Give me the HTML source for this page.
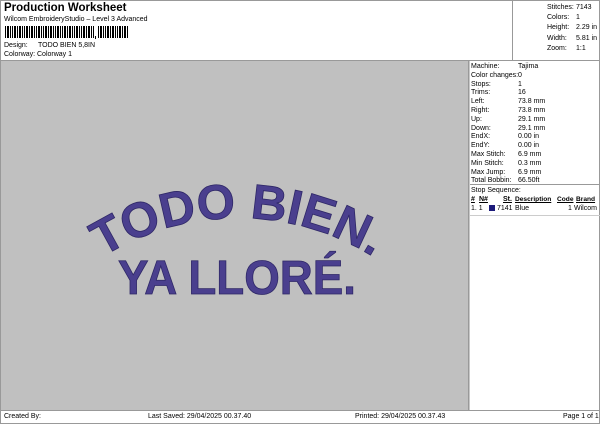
<!DOCTYPE html>
<html><head><style>
*{margin:0;padding:0;box-sizing:border-box}
body{width:600px;height:424px;background:#fff;font-family:"Liberation Sans",Arial,sans-serif;font-size:7px;color:#000;position:relative;overflow:hidden}
.a{position:absolute;white-space:nowrap}
</style></head><body>
<div class="a" style="left:0;top:0;width:600px;height:424px;border:1px solid #999"></div>
<div class="a" style="left:4px;top:2px;font-size:11.5px;font-weight:bold">Production Worksheet</div>
<div class="a" style="left:4px;top:16px">Wilcom EmbroideryStudio – Level 3 Advanced</div>
<svg class="a" style="left:5px;top:26px" width="150" height="13">
<g fill="#000">
<rect x="0" y="0" width="1" height="12"/><rect x="2" y="0" width="2" height="12"/><rect x="5" y="0" width="1" height="12"/><rect x="7" y="0" width="1" height="12"/><rect x="9" y="0" width="2" height="12"/><rect x="12" y="0" width="1" height="12"/><rect x="14" y="0" width="2" height="12"/><rect x="17" y="0" width="1" height="12"/><rect x="19" y="0" width="1" height="12"/><rect x="21" y="0" width="2" height="12"/><rect x="24" y="0" width="1" height="12"/><rect x="26" y="0" width="2" height="12"/><rect x="29" y="0" width="1" height="12"/><rect x="31" y="0" width="1" height="12"/><rect x="33" y="0" width="2" height="12"/><rect x="36" y="0" width="1" height="12"/><rect x="38" y="0" width="1" height="12"/><rect x="40" y="0" width="2" height="12"/><rect x="43" y="0" width="1" height="12"/><rect x="45" y="0" width="2" height="12"/><rect x="48" y="0" width="1" height="12"/><rect x="50" y="0" width="1" height="12"/><rect x="52" y="0" width="2" height="12"/><rect x="55" y="0" width="1" height="12"/><rect x="57" y="0" width="1" height="12"/><rect x="59" y="0" width="2" height="12"/><rect x="62" y="0" width="1" height="12"/><rect x="64" y="0" width="2" height="12"/><rect x="67" y="0" width="1" height="12"/><rect x="69" y="0" width="1" height="12"/><rect x="71" y="0" width="2" height="12"/><rect x="74" y="0" width="1" height="12"/><rect x="76" y="0" width="1" height="12"/><rect x="78" y="0" width="2" height="12"/><rect x="81" y="0" width="1" height="12"/><rect x="83" y="0" width="2" height="12"/><rect x="86" y="0" width="1" height="12"/><rect x="88" y="0" width="1" height="12"/><rect x="90" y="10" width="1" height="3"/><rect x="93" y="0" width="1" height="12"/><rect x="95" y="0" width="2" height="12"/><rect x="98" y="0" width="1" height="12"/><rect x="100" y="0" width="1" height="12"/><rect x="102" y="0" width="2" height="12"/><rect x="105" y="0" width="1" height="12"/><rect x="107" y="0" width="2" height="12"/><rect x="110" y="0" width="1" height="12"/><rect x="112" y="0" width="1" height="12"/><rect x="114" y="0" width="2" height="12"/><rect x="117" y="0" width="1" height="12"/><rect x="119" y="0" width="2" height="12"/><rect x="122" y="0" width="1" height="12"/>
</g></svg>
<div class="a" style="left:4px;top:42px">Design:</div><div class="a" style="left:38px;top:42px">TODO BIEN 5,8IN</div>
<div class="a" style="left:4px;top:51px">Colorway:</div><div class="a" style="left:37px;top:51px">Colorway 1</div>

<div class="a" style="left:512px;top:0;width:1px;height:60px;background:#999"></div>
<div class="a" style="left:547px;top:3px;line-height:10.2px">Stitches:<br>Colors:<br>Height:<br>Width:<br>Zoom:</div>
<div class="a" style="left:576px;top:3px;line-height:10.2px">7143<br>1<br>2.29 in<br>5.81 in<br>1:1</div>

<div class="a" style="left:0;top:60px;width:600px;height:1px;background:#999"></div>
<div class="a" style="left:1px;top:61px;width:467px;height:349px;background:#c0c0c0"></div>
<div class="a" style="left:468px;top:61px;width:1px;height:349px;background:#999"></div>
<div class="a" style="left:469px;top:61px;width:1px;height:349px;background:#c8c8c8"></div>

<div class="a" style="left:471px;top:63px;line-height:8.8px">Machine:<br>Color changes:<br>Stops:<br>Trims:<br>Left:<br>Right:<br>Up:<br>Down:<br>EndX:<br>EndY:<br>Max Stitch:<br>Min Stitch:<br>Max Jump:<br>Total Bobbin:</div>
<div class="a" style="left:518px;top:63px;line-height:8.8px">Tajima<br>0<br>1<br>16<br>73.8 mm<br>73.8 mm<br>29.1 mm<br>29.1 mm<br>0.00 in<br>0.00 in<br>6.9 mm<br>0.3 mm<br>6.9 mm<br>66.50ft</div>
<div class="a" style="left:470px;top:184px;width:130px;height:1px;background:#999"></div>
<div class="a" style="left:471px;top:187px">Stop Sequence:</div>
<div class="a" style="left:471px;top:196px;font-weight:bold;text-decoration:underline">#</div>
<div class="a" style="left:479px;top:196px;font-weight:bold;text-decoration:underline">N#</div>
<div class="a" style="left:503px;top:196px;font-weight:bold;text-decoration:underline">St.</div>
<div class="a" style="left:515px;top:196px;font-weight:bold;text-decoration:underline;font-size:6.6px">Description</div>
<div class="a" style="left:557px;top:196px;font-weight:bold;text-decoration:underline;font-size:6.6px">Code</div>
<div class="a" style="left:576px;top:196px;font-weight:bold;text-decoration:underline;font-size:6.6px">Brand</div>
<div class="a" style="left:471px;top:205px">1. 1</div>
<div class="a" style="left:489px;top:205px;width:6px;height:6px;background:#1c1a7a"></div>
<div class="a" style="left:497px;top:205px">7141</div>
<div class="a" style="left:515px;top:205px">Blue</div>
<div class="a" style="left:568px;top:205px">1</div>
<div class="a" style="left:574px;top:205px">Wilcom</div>
<div class="a" style="left:470px;top:215px;width:130px;height:1px;background:#ccc"></div>

<svg class="a" style="left:0;top:0" width="468" height="410">
<defs><path id="arc" d="M 48 303 A 255 255 0 0 1 428 303"/></defs>
<g fill="#4a3f8e" stroke="#2e2766" stroke-width="0.8" font-family="Liberation Sans,Arial,sans-serif" font-weight="bold">
<text font-size="49"><textPath href="#arc" startOffset="50%" text-anchor="middle">TODO BIEN.</textPath></text>
<text x="118" y="294" font-size="48" textLength="238" lengthAdjust="spacingAndGlyphs">YA LLORÉ.</text>
</g>
</svg>

<div class="a" style="left:0;top:410px;width:600px;height:1px;background:#999"></div>
<div class="a" style="left:4px;top:413px">Created By:</div>
<div class="a" style="left:148px;top:413px">Last Saved: 29/04/2025 00.37.40</div>
<div class="a" style="left:355px;top:413px">Printed: 29/04/2025 00.37.43</div>
<div class="a" style="left:563px;top:413px">Page 1 of 1</div>
</body></html>
